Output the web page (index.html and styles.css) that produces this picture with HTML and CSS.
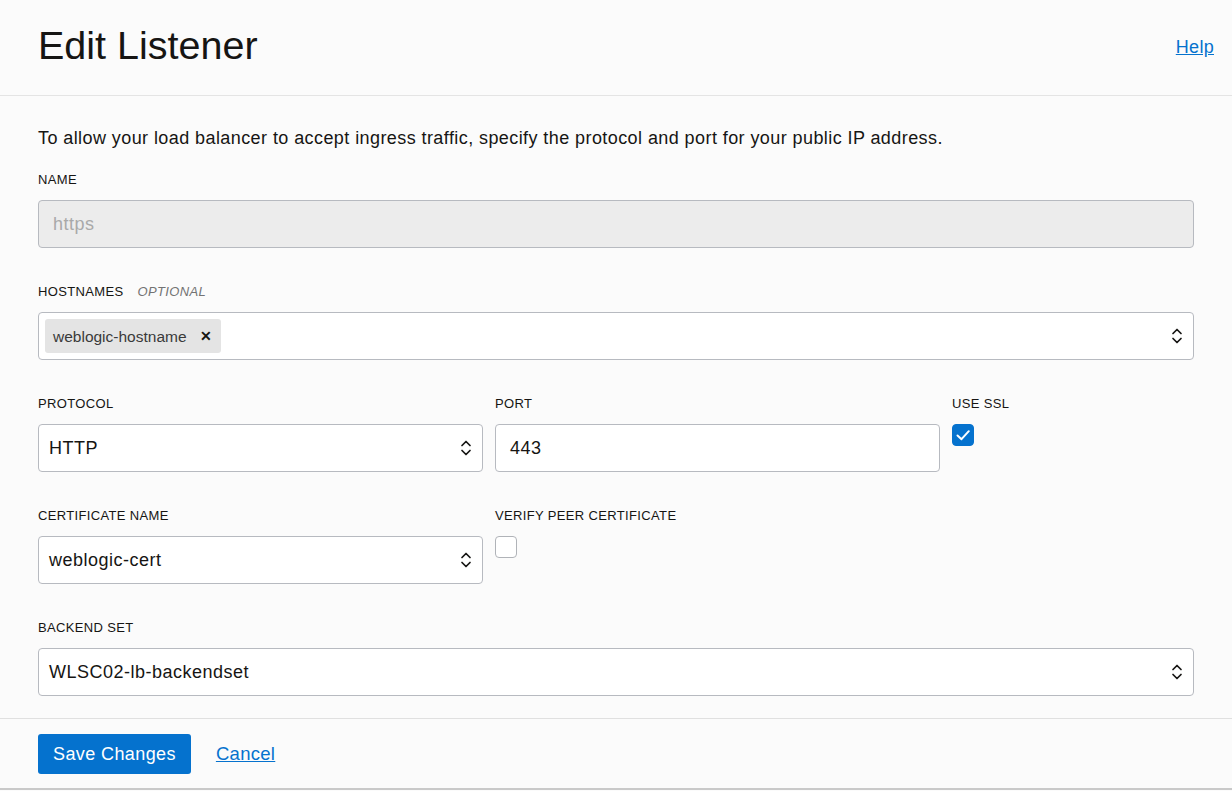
FILE: index.html
```html
<!DOCTYPE html>
<html lang="en">
<head>
<meta charset="utf-8">
<title>Edit Listener</title>
<link rel="stylesheet" href="styles.css">
</head>
<body>
<div class="page">
  <header class="page-header">
    <h1 class="title">Edit Listener</h1>
    <a class="link help" href="#">Help</a>
  </header>

  <main class="form-body">
    <p class="intro">To allow your load balancer to accept ingress traffic, specify the protocol and port for your public IP address.</p>

    <div class="field">
      <div class="label">NAME</div>
      <div class="input text disabled">https</div>
    </div>

    <div class="field">
      <div class="label">HOSTNAMES <span class="optional">OPTIONAL</span></div>
      <div class="input multi">
        <span class="chip">weblogic-hostname <span class="chip-x">&#x2715;</span></span>
        <svg class="chev" viewBox="0 0 12 20" width="12" height="20"><path d="M2 7.5 L6 3.5 L10 7.5 M2 12.5 L6 16.5 L10 12.5" fill="none" stroke="#161513" stroke-width="1.7" stroke-linecap="round" stroke-linejoin="round"/></svg>
      </div>
    </div>

    <div class="field-row">
      <div class="field">
        <div class="label">PROTOCOL</div>
        <div class="input select"><span>HTTP</span>
          <svg class="chev" viewBox="0 0 12 20" width="12" height="20"><path d="M2 7.5 L6 3.5 L10 7.5 M2 12.5 L6 16.5 L10 12.5" fill="none" stroke="#161513" stroke-width="1.7" stroke-linecap="round" stroke-linejoin="round"/></svg>
        </div>
      </div>
      <div class="field">
        <div class="label">PORT</div>
        <div class="input text">443</div>
      </div>
      <div class="field">
        <div class="label">USE SSL</div>
        <span class="checkbox checked"><svg viewBox="0 0 22 22" width="22" height="22"><path d="M5.5 11.5 L9.5 15.2 L16.8 7.2" fill="none" stroke="#fff" stroke-width="2" stroke-linecap="round" stroke-linejoin="round"/></svg></span>
      </div>
    </div>

    <div class="field-row">
      <div class="field">
        <div class="label">CERTIFICATE NAME</div>
        <div class="input select"><span>weblogic-cert</span>
          <svg class="chev" viewBox="0 0 12 20" width="12" height="20"><path d="M2 7.5 L6 3.5 L10 7.5 M2 12.5 L6 16.5 L10 12.5" fill="none" stroke="#161513" stroke-width="1.7" stroke-linecap="round" stroke-linejoin="round"/></svg>
        </div>
      </div>
      <div class="field">
        <div class="label">VERIFY PEER CERTIFICATE</div>
        <span class="checkbox"></span>
      </div>
    </div>

    <div class="field last">
      <div class="label">BACKEND SET</div>
      <div class="input select"><span>WLSC02-lb-backendset</span>
        <svg class="chev" viewBox="0 0 12 20" width="12" height="20"><path d="M2 7.5 L6 3.5 L10 7.5 M2 12.5 L6 16.5 L10 12.5" fill="none" stroke="#161513" stroke-width="1.7" stroke-linecap="round" stroke-linejoin="round"/></svg>
      </div>
    </div>
  </main>

  <footer class="page-footer">
    <button class="btn-primary" type="button">Save Changes</button>
    <a class="link cancel" href="#">Cancel</a>
  </footer>
</div>
</body>
</html>
```

FILE: styles.css
```css
* { box-sizing: border-box; }

html, body {
  margin: 0;
  padding: 0;
  background: #fbfbfb;
}

body {
  font-family: "Liberation Sans", Arial, sans-serif;
  color: #161513;
}

.page {
  width: 1232px;
  height: 791px;
  display: flex;
  flex-direction: column;
}

.page-header {
  height: 96px;
  border-bottom: 1px solid #e4e4e4;
  display: flex;
  align-items: center;
  justify-content: space-between;
  padding: 0 18px 5px 38px;
}

.title {
  margin: 0;
  font-size: 39.5px;
  font-weight: normal;
  line-height: 48px;
  color: #161513;
}

.link {
  color: #0572ce;
  text-decoration: underline;
  font-size: 18px;
  letter-spacing: 0.3px;
}

.help {
  margin-top: 4px;
}

.form-body {
  padding: 30px 38px 22px 38px;
}

.intro {
  margin: 0 0 21px 0;
  font-size: 18px;
  line-height: 24px;
  letter-spacing: 0.42px;
}

.field {
  margin-bottom: 35px;
}

.field.last {
  margin-bottom: 0;
}

.label {
  font-size: 13px;
  line-height: 16px;
  letter-spacing: 0.35px;
  padding-top: 1px;
  margin-bottom: 12px;
  white-space: nowrap;
}

.optional {
  font-style: italic;
  color: #737373;
  margin-left: 10px;
}

.input {
  height: 48px;
  border: 1px solid #b7bac0;
  border-radius: 4px;
  background: #fff;
  display: flex;
  align-items: center;
  font-size: 18px;
  letter-spacing: 0.5px;
  color: #161513;
}

.input.text {
  padding: 0 14px;
}

.input.disabled {
  background: #ececec;
  color: #a9a9a9;
}

.input.select {
  padding: 0 10px 0 10px;
  justify-content: space-between;
}

.input.multi {
  padding: 0 10px 0 6px;
  justify-content: space-between;
}

.chev {
  flex: none;
}

.chip {
  height: 34px;
  background: #e4e4e4;
  border-radius: 3px;
  display: inline-flex;
  align-items: center;
  padding: 2px 9px 0 8px;
  font-size: 15.5px;
  letter-spacing: 0;
  color: #3a3a3a;
}

.chip-x {
  font-size: 14px;
  font-weight: bold;
  margin-left: 13px;
  margin-top: -3px;
  color: #161513;
}

.field-row {
  display: grid;
  grid-template-columns: 445px 445px 1fr;
  column-gap: 12px;
}

.checkbox {
  display: block;
  width: 22px;
  height: 22px;
  margin-top: 2px;
  border: 1px solid #b0b3b8;
  border-radius: 4px;
  background: #fff;
}

.checkbox.checked {
  background: #0572ce;
  border-color: #0572ce;
}

.checkbox.checked svg {
  display: block;
  margin: -1px;
}

.page-footer {
  border-top: 1px solid #e0e0e0;
  border-bottom: 2px solid #c9c9c9;
  padding: 15px 38px 14px 38px;
  display: flex;
  align-items: center;
  gap: 25px;
}

.btn-primary {
  height: 40px;
  padding: 0 15px;
  background: #0572ce;
  color: #fff;
  border: none;
  border-radius: 3px;
  font-family: "Liberation Sans", Arial, sans-serif;
  font-size: 18px;
  letter-spacing: 0.4px;
}

.cancel {
  font-size: 18.5px;
}
```
